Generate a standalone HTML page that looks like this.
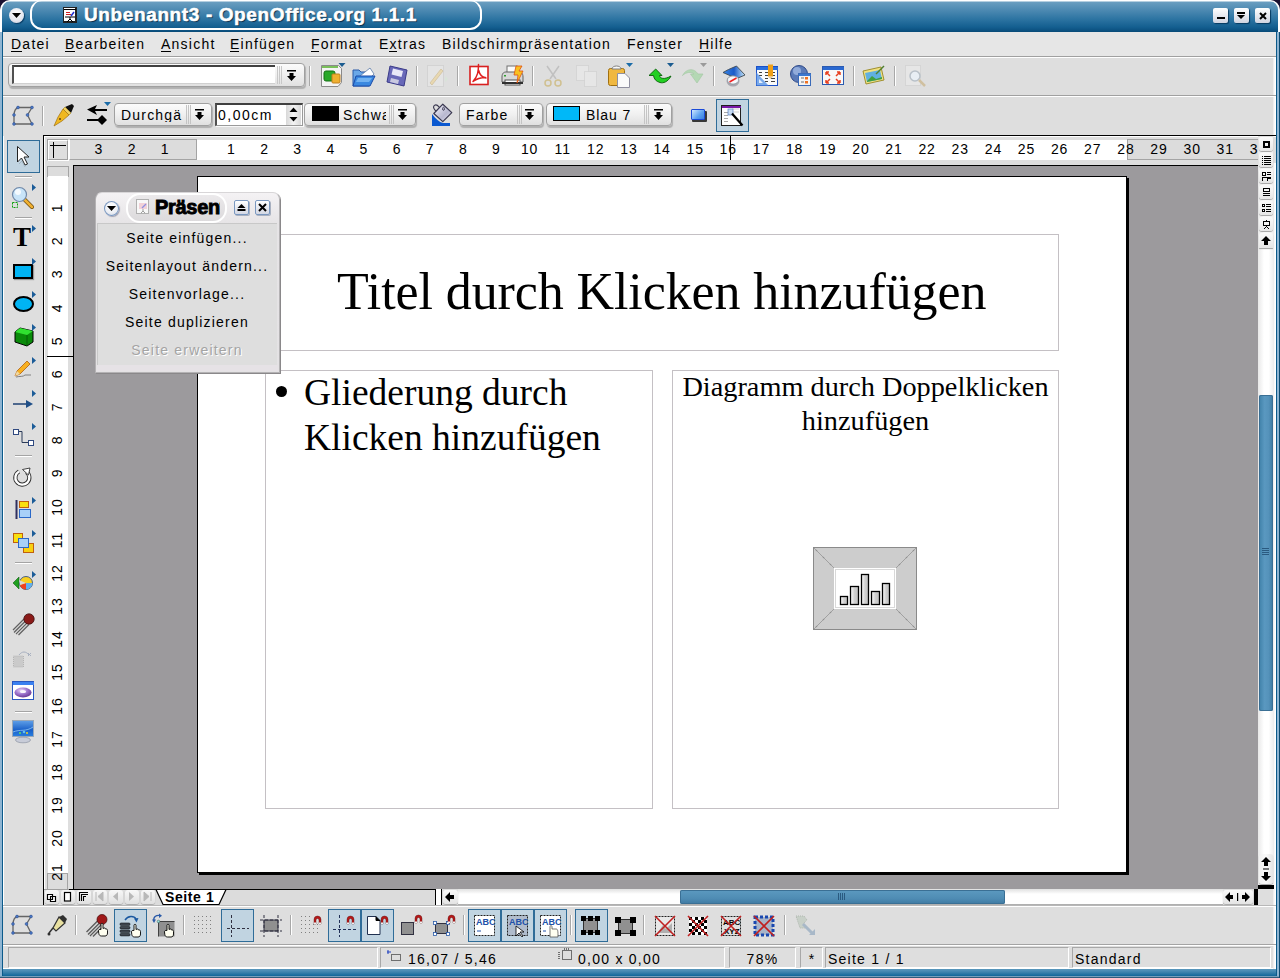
<!DOCTYPE html>
<html><head><meta charset="utf-8">
<style>
*{margin:0;padding:0;box-sizing:border-box}
html,body{width:1280px;height:978px;overflow:hidden;background:#dedede;font-family:"Liberation Sans",sans-serif;font-size:14px;color:#000}
.a{position:absolute}
.t{position:absolute;white-space:nowrap;line-height:1}
.hl{position:absolute;height:1px;background:#a0a0a0}
.wl{position:absolute;height:1px;background:#fff}
.vs{position:absolute;width:2px;height:20px;border-left:1px solid #a8a8a8;border-right:1px solid #fff}
.menu{top:37px;letter-spacing:1.25px}
.ul{position:absolute;height:1px;background:#000}
svg{position:absolute;overflow:visible}
.cb{position:absolute;border:1px solid #a0a0a0;border-radius:4px;background:linear-gradient(#fbfbfb,#f0f0f0 50%,#e0e0e0);box-shadow:1px 2px 1px #b0b0b0}
.sel{position:absolute;background:#c1d4e1;border:1px solid #2f6c98}
.rn{position:absolute;font-size:14px;line-height:1;letter-spacing:0.9px}
</style></head>
<body>
<!-- window frame -->
<div class="a" style="left:0;top:0;width:1280px;height:978px;background:#8fb5d2"></div>
<div class="a" style="left:0;top:976px;width:1280px;height:2px;background:linear-gradient(#9cc0da,#0a3a5c)"></div>
<div class="a" style="left:2px;top:0;width:1275px;height:976px;background:#0c5a8a"></div>
<div class="a" style="left:3px;top:969px;width:1273px;height:7px;background:linear-gradient(#5a98bd,#3f84ae 3px,#10679a)"></div>
<div class="a" style="left:1279px;top:30px;width:1px;height:948px;background:#0d4a70"></div>
<div class="a" style="left:3px;top:32px;width:1273px;height:937px;background:#dedede"></div>
<div class="a" style="left:3px;top:968px;width:1273px;height:1px;background:#fff"></div>
<div class="a" style="left:1273px;top:32px;width:3px;height:937px;background:linear-gradient(90deg,#e8e8e8,#fff 66%,#fff)"></div>
<!-- title bar -->
<div class="a" style="left:0;top:0;width:1280px;height:32px;background:linear-gradient(#fff 0,#fff 1px,#6a9ec0 2px,#4d8ab2 10px,#2d74a2 19px,#145f90 27px,#0a4f7e 31px,#094a76 32px);border-radius:10px 10px 0 0"></div>
<div class="a" style="left:0;top:0;width:10px;height:10px;background:radial-gradient(circle at 100% 100%,transparent 9px,#1a1030 10px)"></div>
<div class="a" style="left:1270px;top:0;width:10px;height:10px;background:radial-gradient(circle at 0 100%,transparent 9px,#1a1030 10px)"></div>
<div class="a" style="left:0;top:0;width:1280px;height:32px;border:1px solid #fff;border-left-width:2px;border-right-width:2px;border-bottom:none;border-radius:10px 10px 0 0"></div>
<!-- pill -->
<div class="a" style="left:30px;top:0;width:452px;height:30px;border:2px solid #fff;border-top-width:1px;border-radius:12px;background:linear-gradient(#fff 0,#6a9ec0 1px,#4d8ab2 9px,#2d74a2 18px,#145f90 26px,#10598a)"></div>
<!-- menu circle button -->
<div class="a" style="left:9px;top:8px;width:15px;height:15px;border-radius:50%;background:radial-gradient(circle at 50% 35%,#fff,#e4e6ee 60%,#c4c8d6);box-shadow:1px 1px 1px #0a3e66"></div>
<svg style="left:12px;top:13px" width="10" height="6"><path d="M0 0H9L4.5 5z" fill="#000"/></svg>
<!-- title icon -->
<div class="a" style="left:63px;top:7px;width:14px;height:16px;background:#fff;border:1px solid #222;border-right-width:2px;border-bottom-width:2px"></div>
<svg style="left:64px;top:8px" width="12" height="14"><rect x="0" y="1" width="12" height="1" fill="#000"/><rect x="2" y="4" width="4" height="1" fill="#d02020"/><rect x="2" y="6" width="5" height="1" fill="#d02020"/><path d="M7 8L10 4" stroke="#2030d0" stroke-width="1.5"/><path d="M1 9H11M6 9V11M6 11L3 14M6 11L9 14" stroke="#000" stroke-width="1" fill="none"/></svg>
<div class="t" style="left:84px;top:5px;font-size:19px;font-weight:bold;color:#fff;letter-spacing:0.62px;-webkit-text-stroke:0.5px #fff;text-shadow:1px 1px 1px #082a48">Unbenannt3 - OpenOffice.org 1.1.1</div>
<!-- window buttons -->
<div class="a" style="left:1213px;top:8px;width:15px;height:15px;border-radius:2px;background:linear-gradient(#fff,#e8eaf0 50%,#d0d4e0);box-shadow:1px 1px 1px #063a60"></div>
<div class="a" style="left:1217px;top:17px;width:8px;height:2px;background:#000"></div>
<div class="a" style="left:1234px;top:8px;width:15px;height:15px;border-radius:2px;background:linear-gradient(#fff,#e8eaf0 50%,#d0d4e0);box-shadow:1px 1px 1px #063a60"></div>
<svg style="left:1237px;top:12px" width="9" height="8"><rect x="0" y="0" width="8" height="2" fill="#000"/><path d="M0 3H8L4 7z" fill="#000"/></svg>
<div class="a" style="left:1255px;top:8px;width:15px;height:15px;border-radius:2px;background:linear-gradient(#fff,#e8eaf0 50%,#d0d4e0);box-shadow:1px 1px 1px #063a60"></div>
<svg style="left:1259px;top:12px" width="8" height="8"><path d="M1 1L7 7M7 1L1 7" stroke="#000" stroke-width="2"/></svg>

<!-- menu bar -->
<div class="a" style="left:3px;top:32px;width:1273px;height:24px;background:#e6e6e6"></div>
<div class="hl" style="left:3px;top:56px;width:1273px"></div>
<div class="wl" style="left:3px;top:57px;width:1273px"></div>
<div class="t menu" style="left:11px">Datei</div><div class="ul" style="left:11px;top:51px;width:11px"></div>
<div class="t menu" style="left:65px">Bearbeiten</div><div class="ul" style="left:65px;top:51px;width:10px"></div>
<div class="t menu" style="left:161px">Ansicht</div><div class="ul" style="left:161px;top:51px;width:10px"></div>
<div class="t menu" style="left:230px">Einfügen</div><div class="ul" style="left:230px;top:51px;width:9px"></div>
<div class="t menu" style="left:311px">Format</div><div class="ul" style="left:311px;top:51px;width:8px"></div>
<div class="t menu" style="left:379px">Extras</div><div class="ul" style="left:389px;top:51px;width:8px"></div>
<div class="t menu" style="left:442px">Bildschirmpräsentation</div><div class="ul" style="left:520px;top:51px;width:9px"></div>
<div class="t menu" style="left:627px">Fenster</div><div class="ul" style="left:654px;top:51px;width:8px"></div>
<div class="t menu" style="left:699px">Hilfe</div><div class="ul" style="left:699px;top:51px;width:11px"></div>

<!-- toolbar separators -->
<div class="hl" style="left:3px;top:95px;width:1273px"></div>
<div class="wl" style="left:3px;top:96px;width:1273px"></div>

<!-- TB1 combo -->
<div class="cb" style="left:8px;top:63px;width:297px;height:24px"></div>
<div class="a" style="left:12px;top:65px;width:263px;height:19px;background:#fff;border-top:2px solid #404040;border-left:2px solid #505050;border-bottom:1px solid #d0d0d0"></div>
<div class="a" style="left:277px;top:66px;width:5px;height:18px;border-left:1px solid #c8c8c8;border-right:1px solid #c8c8c8"></div>
<div class="a" style="left:279px;top:66px;width:1px;height:18px;background:#c8c8c8"></div>
<svg style="left:287px;top:70px" width="10" height="12"><rect x="0" y="0" width="9" height="1.5" fill="#000"/><path d="M2.5 3H6.5V6H9L4.5 11L0 6H2.5z" fill="#000"/></svg>
<div class="vs" style="left:309px;top:66px"></div>
<!-- new -->
<svg style="left:321px;top:64px" width="26" height="24">
<path d="M0.5 1.5H17.5L20.5 4.5V18.5L17 22.5H0.5z" fill="#f4f4f4" stroke="#8a8a8a"/>
<rect x="1" y="2" width="16" height="2" fill="#7ac05a"/>
<rect x="3" y="7" width="11" height="10" rx="2" fill="#2aa82a" stroke="#157015"/>
<rect x="11" y="10" width="8" height="9" rx="1" fill="#f0b030" stroke="#c08020"/>
<path d="M17.5 -1H24.5L21 3z" fill="#1b5c90"/>
</svg>
<!-- open -->
<svg style="left:352px;top:66px" width="24" height="21">
<path d="M1 4H7L9 6H17V20H1z" fill="#6aa8e8" stroke="#2a5aa8"/>
<path d="M8 10L18 2L22 8L14 16z" fill="#fff" stroke="#5a7aa8" stroke-width="0.8"/>
<path d="M4 10H23L18 20H1z" fill="#3a88e0" stroke="#1a4aa8"/>
<path d="M6 12H20L17 16H4z" fill="#8ac4f8" opacity="0.7"/>
</svg>
<!-- save -->
<svg style="left:386px;top:65px" width="22" height="22">
<path d="M4 1L21 5L18 21L1 17z" fill="#6868b8" stroke="#3a3a88"/>
<path d="M7 3.5L17 6L15.5 12L5.5 9.5z" fill="#e8e8f8"/>
<path d="M5 13L13 15L12 19L4 17z" fill="#c8c8e0"/>
</svg>
<div class="vs" style="left:416px;top:66px"></div>
<!-- edit disabled -->
<svg style="left:427px;top:65px" width="24" height="23">
<rect x="0.5" y="0.5" width="16" height="21" fill="#e4e4e4" stroke="#c4c4c4" stroke-dasharray="1 1"/>
<path d="M3 18L14 4L16 6L5 20z" fill="#e8d8b0" stroke="#d0c0a0" stroke-width="0.8"/>
<path d="M18 11l3 3l-3 3z" fill="#d8e4d8"/>
</svg>
<div class="vs" style="left:457px;top:66px"></div>
<!-- pdf -->
<svg style="left:469px;top:64px" width="21" height="24">
<rect x="1" y="2.5" width="18" height="18" fill="#fff" stroke="#d82020" stroke-width="1.6"/>
<path d="M9.5 0.5C9.5 7 9 12 4 17.5M9.5 6C10.5 10 13 13.5 17 14M4 17.5C8 14.5 12 13.5 16.5 13.5" fill="none" stroke="#e02020" stroke-width="1.5" stroke-linecap="round"/>
</svg>
<!-- print -->
<svg style="left:501px;top:65px" width="24" height="23">
<rect x="6" y="1" width="10" height="7" fill="#fafafa" stroke="#707070"/>
<path d="M1 12C1 8 3 7 5 7H18C20 7 22 8 22 12V17H1z" fill="#d8d8d8" stroke="#606060"/>
<rect x="4" y="15" width="15" height="5" fill="#fff" stroke="#505050"/>
<rect x="1" y="17" width="21" height="2" fill="#303030"/>
<rect x="3" y="10" width="2" height="1.5" fill="#30a030"/>
<path d="M15 1L21 1L18 6L22 6L16 18L17 10L13 10z" fill="#f8c020" stroke="#e05010" stroke-width="0.8"/>
</svg>
<div class="vs" style="left:532px;top:66px"></div>
<!-- cut disabled -->
<svg style="left:543px;top:65px" width="21" height="22">
<path d="M7 14L16 1M13 14L4 1" stroke="#c0c0c0" stroke-width="1.5"/>
<circle cx="5" cy="18" r="3" fill="none" stroke="#d0c090" stroke-width="1.5"/>
<circle cx="15" cy="18" r="3" fill="none" stroke="#d0c090" stroke-width="1.5"/>
</svg>
<!-- copy disabled -->
<svg style="left:576px;top:65px" width="22" height="22">
<rect x="0.5" y="0.5" width="12" height="15" fill="#e6e6e6" stroke="#c8c8c8" stroke-dasharray="1 1"/>
<rect x="8.5" y="6.5" width="12" height="15" fill="#e6e6e6" stroke="#c8c8c8" stroke-dasharray="1 1"/>
</svg>
<!-- paste -->
<svg style="left:608px;top:63px" width="26" height="25">
<rect x="0.5" y="5.5" width="16" height="17" rx="2" fill="#f0b840" stroke="#a07010"/>
<path d="M4 6C4 2 13 2 13 6z" fill="#f8f8f8" stroke="#808080"/>
<path d="M9.5 10.5H17L21.5 15V24.5H9.5z" fill="#fafafa" stroke="#9090a0"/>
<path d="M18 0L25 0L21.5 4z" fill="#1b6ca8"/>
</svg>
<!-- undo -->
<svg style="left:649px;top:63px" width="26" height="23">
<path d="M0 12.5L6.7 6L13 12.5H10.5C11 15.5 15 17 22 13C19 19 14 20.5 11 19.5C7 18.5 5 16 4.5 12.5Z" fill="#22d022" stroke="#0a600a" stroke-width="0.9" stroke-linejoin="round"/>
<path d="M18 0L25 0L21.5 4z" fill="#1b5c90"/>
</svg>
<!-- redo disabled -->
<svg style="left:682px;top:63px" width="26" height="23">
<path d="M0.5 12.5C4 5.5 12 4.5 16 11L21 11L15 20L8.5 11L12 11C9.5 8.5 4 9 0.5 12.5Z" fill="#b4d8b4" stroke="#a8c8a8" stroke-width="0.7"/>
<path d="M18 0L25 0L21.5 4z" fill="#9a9a9a"/>
</svg>
<div class="vs" style="left:713px;top:66px"></div>
<!-- navigator -->
<svg style="left:722px;top:64px" width="25" height="24">
<defs><linearGradient id="mp" x1="0" y1="0" x2="1" y2="0"><stop offset="0" stop-color="#3a88e8"/><stop offset="0.5" stop-color="#1a5ac8"/><stop offset="1" stop-color="#c8e8f8"/></linearGradient></defs>
<path d="M1 8.5L6.5 5.5L14.5 2L23 11L16 14L9 12Z" fill="url(#mp)" stroke="#404850" stroke-width="0.9" stroke-linejoin="round"/>
<ellipse cx="11" cy="17" rx="6.5" ry="5.5" fill="#a8a8b0"/>
<ellipse cx="11" cy="16" rx="5.5" ry="4" fill="#f4f8fc" stroke="#808890" stroke-width="0.6"/>
<path d="M7.5 18L14.5 14" stroke="#f02020" stroke-width="1.6"/>
</svg>
<!-- table pencil -->
<svg style="left:756px;top:64px" width="23" height="23">
<rect x="0.5" y="2.5" width="21" height="19" fill="#fafafa" stroke="#1a50c8"/>
<rect x="1" y="3" width="21" height="3" fill="#2a70e0"/>
<path d="M3 8.5H6M9 8.5H12M15 8.5H19M3 11.5H6M9 11.5H12M15 11.5H19M9 14.5H12M15 14.5H19M9 17.5H12M15 17.5H19" stroke="#404040" stroke-width="1"/>
<path d="M0.5 8.5V21.5H12.5z" fill="#6aa0e8" opacity="0.9"/>
<path d="M3 15V19H7z" fill="#fff" opacity="0.8"/>
<rect x="12" y="0.5" width="5" height="12" fill="#f0a018"/>
<path d="M12 12.5H17L14.5 15z" fill="#e8c890"/>
</svg>
<!-- globe -->
<svg style="left:790px;top:65px" width="22" height="22">
<circle cx="9" cy="9" r="8.5" fill="#5a7ab8" stroke="#304a88"/>
<circle cx="7" cy="6" r="4" fill="#a8c0e8" opacity="0.7"/>
<rect x="8.5" y="8.5" width="12" height="12" fill="#f4f4f4" stroke="#3a6ab8"/>
<rect x="9" y="9" width="12" height="2" fill="#3a78d0"/>
<rect x="15" y="12" width="3" height="2.5" fill="#f07020"/><rect x="15" y="16" width="3" height="2.5" fill="#f07020"/>
<path d="M11 13H14M11 17H14" stroke="#707070"/>
</svg>
<!-- fullscreen -->
<svg style="left:822px;top:66px" width="23" height="20">
<rect x="0.5" y="0.5" width="21" height="18" fill="#f8f8f8" stroke="#2a5ab0"/>
<rect x="1" y="1" width="21" height="3" fill="#2a68d0"/>
<path d="M4 6L8 10M4 6H7M4 6V9M18 6L14 10M18 6H15M18 6V9M4 17L8 13M4 17H7M4 17V14M18 17L14 13M18 17H15M18 17V14" stroke="#e84020" stroke-width="1.5" fill="none"/>
</svg>
<div class="vs" style="left:853px;top:66px"></div>
<!-- picture -->
<svg style="left:862px;top:65px" width="24" height="22">
<path d="M1 6L19 2L22 15L4 19z" fill="#f0e080" stroke="#a09030"/>
<path d="M3 8L18 5L20 14L5 17z" fill="#60b0e0"/>
<path d="M5 16L10 11L14 14L20 12V14L5 17z" fill="#40a040"/>
<path d="M14 9L22 1" stroke="#508030" stroke-width="1.5"/>
</svg>
<div class="vs" style="left:894px;top:66px"></div>
<!-- zoom disabled -->
<svg style="left:905px;top:65px" width="22" height="22">
<rect x="0.5" y="0.5" width="15" height="20" fill="#e6e6e6" stroke="#c8c8c8" stroke-dasharray="1 1"/>
<circle cx="10" cy="11" r="5" fill="#e8eef4" stroke="#b8c0c8" stroke-width="1.5"/>
<path d="M14 15L20 21" stroke="#d0c0a0" stroke-width="2.5"/>
</svg>

<!--TB1-->
<!-- TB2 -->
<svg style="left:13px;top:106px" width="22" height="20">
<path d="M5 1.5H19L14.5 9L19 18H1V9C1 5 3 2 5 1.5z" fill="none" stroke="#656565" stroke-width="1.3"/>
<g fill="#4a78c8" stroke="#2a4a88" stroke-width="0.5"><circle cx="5" cy="1.5" r="1.4"/><circle cx="19" cy="1.5" r="1.4"/><circle cx="1" cy="9" r="1.4"/><circle cx="14.5" cy="9" r="1.4"/><circle cx="1" cy="18" r="1.4"/><circle cx="19" cy="18" r="1.4"/></g>
</svg>
<div class="vs" style="left:42px;top:106px"></div>
<svg style="left:54px;top:104px" width="21" height="23">
<path d="M11 3L18 0L20 2L17 9z" fill="#101010"/>
<path d="M11 3L17 9L15 11L9 5z" fill="#f0d060" stroke="#a08020" stroke-width="0.6"/>
<path d="M9 5L15 11L8 17L0 22L4 13z" fill="#f0b820" stroke="#a07010" stroke-width="0.7"/>
<circle cx="6" cy="15" r="1" fill="#604010"/>
</svg>
<svg style="left:86px;top:101px" width="26" height="24">
<path d="M1 8.5L11 4L9 8H21V10H9L11 14z" fill="#000"/>
<path d="M1 19H14" stroke="#000" stroke-width="2"/>
<path d="M16 14L21 19L16 24L11 19z" fill="#000"/>
<path d="M18 1L25 1L21.5 5z" fill="#1b6ca8"/>
</svg>
<!-- combo durchg -->
<div class="cb" style="left:114px;top:103px;width:98px;height:23px"></div>
<div class="t" style="left:121px;top:108px;letter-spacing:1.2px;width:65px;overflow:hidden">Durchgä</div>
<div class="a" style="left:186px;top:105px;width:5px;height:19px;border-left:1px solid #c4c4c4;border-right:1px solid #c4c4c4"></div>
<div class="a" style="left:188px;top:105px;width:1px;height:19px;background:#c4c4c4"></div>
<svg style="left:195px;top:109px" width="10" height="12"><rect x="0" y="0" width="9" height="1.5" fill="#000"/><path d="M2.5 3H6.5V6H9L4.5 11L0 6H2.5z" fill="#000"/></svg>
<!-- spin -->
<div class="a" style="left:215px;top:103px;width:88px;height:23px;background:#fff;border:1px solid #9a9a9a;border-top:2px solid #404040;border-left:2px solid #505050;box-shadow:1px 1px 0 #f8f8f8"></div>
<div class="t" style="left:218px;top:108px;letter-spacing:1.5px">0,00cm</div>
<div class="a" style="left:286px;top:105px;width:15px;height:20px;background:linear-gradient(90deg,#d8d8d8,#f4f4f4 50%,#d8d8d8)"></div>
<svg style="left:289px;top:106px" width="9" height="18"><path d="M0.5 6L4.5 1.5L8.5 6z" fill="#000"/><path d="M0.5 11L4.5 15.5L8.5 11z" fill="#000"/></svg>
<!-- combo schwarz -->
<div class="cb" style="left:304px;top:103px;width:112px;height:23px"></div>
<div class="a" style="left:312px;top:106px;width:27px;height:15px;background:#000"></div>
<div class="t" style="left:343px;top:108px;letter-spacing:1.2px;width:43px;overflow:hidden">Schwarz</div>
<div class="a" style="left:389px;top:105px;width:5px;height:19px;border-left:1px solid #c4c4c4;border-right:1px solid #c4c4c4"></div>
<div class="a" style="left:391px;top:105px;width:1px;height:19px;background:#c4c4c4"></div>
<svg style="left:398px;top:109px" width="10" height="12"><rect x="0" y="0" width="9" height="1.5" fill="#000"/><path d="M2.5 3H6.5V6H9L4.5 11L0 6H2.5z" fill="#000"/></svg>
<!-- bucket -->
<svg style="left:431px;top:103px" width="22" height="24">
<defs><linearGradient id="bk" x1="0" y1="0" x2="1" y2="1"><stop offset="0" stop-color="#fafaff"/><stop offset="0.6" stop-color="#b8b8d0"/><stop offset="1" stop-color="#e8e8f4"/></linearGradient></defs>
<path d="M1 11V23H19V20H12C8 19 5 16 1 11Z" fill="#0a58d0"/>
<ellipse cx="6" cy="5.5" rx="2.6" ry="4" transform="rotate(-40 6 5.5)" fill="none" stroke="#3a3850" stroke-width="1.1"/>
<path d="M2.8 10.5L11.8 1.2L20.8 9.6L11.8 18.6Z" fill="url(#bk)" stroke="#3a3850" stroke-width="1.2" stroke-linejoin="round"/>
<ellipse cx="12.5" cy="5.8" rx="0.9" ry="1.6" fill="none" stroke="#3a3850" stroke-width="0.9"/>
</svg>
<!-- combo farbe -->
<div class="cb" style="left:459px;top:103px;width:84px;height:23px"></div>
<div class="t" style="left:466px;top:108px;letter-spacing:1.2px">Farbe</div>
<div class="a" style="left:517px;top:105px;width:5px;height:19px;border-left:1px solid #c4c4c4;border-right:1px solid #c4c4c4"></div>
<div class="a" style="left:519px;top:105px;width:1px;height:19px;background:#c4c4c4"></div>
<svg style="left:525px;top:109px" width="10" height="12"><rect x="0" y="0" width="9" height="1.5" fill="#000"/><path d="M2.5 3H6.5V6H9L4.5 11L0 6H2.5z" fill="#000"/></svg>
<!-- combo blau -->
<div class="cb" style="left:546px;top:103px;width:126px;height:23px"></div>
<div class="a" style="left:553px;top:106px;width:27px;height:15px;background:#00b8f8;border:1px solid #000"></div>
<div class="t" style="left:586px;top:108px;letter-spacing:0.9px">Blau 7</div>
<div class="a" style="left:644px;top:105px;width:5px;height:19px;border-left:1px solid #c4c4c4;border-right:1px solid #c4c4c4"></div>
<div class="a" style="left:646px;top:105px;width:1px;height:19px;background:#c4c4c4"></div>
<svg style="left:654px;top:109px" width="10" height="12"><rect x="0" y="0" width="9" height="1.5" fill="#000"/><path d="M2.5 3H6.5V6H9L4.5 11L0 6H2.5z" fill="#000"/></svg>
<!-- shadow -->
<div class="a" style="left:692px;top:111px;width:15px;height:11px;background:#383838;border-radius:1px;filter:blur(0.3px)"></div>
<div class="a" style="left:691px;top:109px;width:14px;height:11px;background:linear-gradient(135deg,#d0e8ff,#5aa0f0 60%,#3a80e0);border:1px solid #1a4ad8;border-radius:1px"></div>
<!-- selected 'text' button -->
<div class="sel" style="left:716px;top:99px;width:33px;height:33px"></div>
<svg style="left:721px;top:104px" width="24" height="24">
<rect x="0.5" y="1.5" width="19" height="20" fill="#fff" stroke="#202020"/>
<rect x="1" y="2" width="19" height="2" fill="#7a1aa8"/>
<path d="M3 8.5H7M3 11.5H7M3 14.5H7M3 17.5H7" stroke="#a8a8a8"/>
<path d="M11 5H18M11 8H18" stroke="#d0d0d0"/>
<rect x="7" y="5" width="5" height="6" fill="#c8dcf4" stroke="#5a80c0" stroke-width="0.7"/>
<path d="M11 9.5L21.5 21.5" stroke="#000" stroke-width="2.2"/>
</svg>

<!--TB2-->
<!-- LEFT TOOLBAR -->
<div class="a" style="left:3px;top:136px;width:1px;height:769px;background:#fff"></div>
<div class="sel" style="left:7px;top:140px;width:33px;height:33px"></div>
<svg style="left:16px;top:145px" width="14" height="22"><path d="M1.5 1.5V17L5.5 13L9 20L11.5 19L8 12H13z" fill="#fff" stroke="#222" stroke-width="1" stroke-linejoin="round"/><path d="M3 19L6 16L9 22" stroke="#8a9aa8" stroke-width="1" fill="none" opacity="0.5"/></svg>
<div class="a" style="left:15px;top:176px;width:17px;height:1px;background:#a4a4a4;box-shadow:0 1px 0 #fff"></div>
<svg style="left:11px;top:184px" width="26" height="26">
<path d="M13 15L21 23" stroke="#6a4a10" stroke-width="4" stroke-linecap="round"/><path d="M13 15L21 23" stroke="#f0b030" stroke-width="2.6" stroke-linecap="round"/>
<circle cx="8.5" cy="10.5" r="7" fill="#c8e4f8" stroke="#7088a8" stroke-width="1.2"/><circle cx="7" cy="8" r="3" fill="#fff" opacity="0.8"/>
<rect x="1.5" y="18.5" width="5" height="5" fill="none" stroke="#10a010" stroke-dasharray="2 1"/>
<path d="M21 0L25 3.5L21 7z" fill="#1b5c98"/>
</svg>
<div class="a" style="left:15px;top:217px;width:17px;height:1px;background:#a4a4a4;box-shadow:0 1px 0 #fff"></div>
<div class="t" style="left:13px;top:224px;font-family:'Liberation Serif',serif;font-size:27px;font-weight:bold">T</div>
<svg style="left:32px;top:225px" width="5" height="8"><path d="M0 0L4 3.5L0 7z" fill="#1b5c98"/></svg>
<div class="a" style="left:13px;top:264px;width:20px;height:15px;background:#00b4f4;border:2px solid #000;box-shadow:1px 1px 1px #999"></div>
<svg style="left:32px;top:258px" width="5" height="8"><path d="M0 0L4 3.5L0 7z" fill="#1b5c98"/></svg>
<div class="a" style="left:13px;top:296px;width:21px;height:16px;background:#00b4f4;border:2px solid #000;border-radius:50%"></div>
<svg style="left:32px;top:291px" width="5" height="8"><path d="M0 0L4 3.5L0 7z" fill="#1b5c98"/></svg>
<svg style="left:14px;top:327px" width="20" height="20"><path d="M1 5L6 1L19 4V15L13 19L1 15z" fill="#0a8a0a" stroke="#000" stroke-width="1"/><path d="M1 5L6 1L19 4L13 8z" fill="#30e030"/><path d="M13 8V19" stroke="#065a06"/></svg>
<svg style="left:32px;top:324px" width="5" height="8"><path d="M0 0L4 3.5L0 7z" fill="#1b5c98"/></svg>
<svg style="left:13px;top:359px" width="20" height="20"><path d="M2 17L4 12L14 2L17 5L7 15z" fill="#f8b020" stroke="#b06010" stroke-width="0.8"/><path d="M2 17L4 12L7 15z" fill="#f0d8a0"/><path d="M3 18C7 17 10 18 12 16H18" stroke="#808080" fill="none"/></svg>
<svg style="left:32px;top:357px" width="5" height="8"><path d="M0 0L4 3.5L0 7z" fill="#1b5c98"/></svg>
<svg style="left:13px;top:397px" width="21" height="10"><path d="M0 7H14" stroke="#2a4a78" stroke-width="1.6"/><path d="M13 3L20 7L13 11z" fill="#1f4f88"/></svg>
<svg style="left:32px;top:390px" width="5" height="8"><path d="M0 0L4 3.5L0 7z" fill="#1b5c98"/></svg>
<svg style="left:12px;top:428px" width="22" height="19"><path d="M4 3.5H10V14.5H19" stroke="#2a3a58" stroke-width="1" fill="none"/><rect x="1.5" y="1.5" width="5" height="5" fill="#fff" stroke="#304a80"/><rect x="16.5" y="12.5" width="5" height="5" fill="#fff" stroke="#304a80"/></svg>
<svg style="left:32px;top:423px" width="5" height="8"><path d="M0 0L4 3.5L0 7z" fill="#1b5c98"/></svg>
<div class="a" style="left:15px;top:455px;width:17px;height:1px;background:#a4a4a4;box-shadow:0 1px 0 #fff"></div>
<svg style="left:14px;top:468px" width="19" height="19"><path d="M12.5 4A7 7 0 1 1 5 3.5" fill="none" stroke="#303030" stroke-width="4.2"/><path d="M12.5 4A7 7 0 1 1 5 3.5" fill="none" stroke="#fff" stroke-width="2.4"/><path d="M8.5 1.5L16 0L14.5 7z" fill="#fff" stroke="#303030" stroke-width="0.9" stroke-linejoin="round"/></svg>
<svg style="left:15px;top:500px" width="17" height="20"><rect x="0.5" y="0" width="2" height="19" fill="#303060"/><rect x="4.5" y="1.5" width="9" height="6" fill="#f8e010" stroke="#c06010"/><rect x="4.5" y="9.5" width="11" height="8" fill="#a8d0f8" stroke="#2a68c8"/></svg>
<svg style="left:32px;top:497px" width="5" height="8"><path d="M0 0L4 3.5L0 7z" fill="#1b5c98"/></svg>
<svg style="left:13px;top:533px" width="22" height="21"><rect x="0.5" y="0.5" width="9" height="9" fill="#f8e010" stroke="#c06010"/><rect x="10.5" y="10.5" width="10" height="9" fill="#f8d010" stroke="#c06010"/><rect x="5.5" y="5.5" width="10" height="9" fill="#a8d0f8" stroke="#2a68c8"/></svg>
<svg style="left:32px;top:530px" width="5" height="8"><path d="M0 0L4 3.5L0 7z" fill="#1b5c98"/></svg>
<div class="a" style="left:15px;top:562px;width:17px;height:1px;background:#a4a4a4;box-shadow:0 1px 0 #fff"></div>
<svg style="left:12px;top:575px" width="22" height="16"><path d="M1 8L7 2V14z" fill="#20a020" stroke="#106010" stroke-width="0.6"/><circle cx="14" cy="8" r="6.5" fill="#f8d020" stroke="#204080" stroke-width="0.8"/><path d="M14 8L20.5 8A6.5 6.5 0 0 1 14 14.5z" fill="#60b0f0"/><path d="M14 8L14 14.5A6.5 6.5 0 0 1 8 10z" fill="#f04020"/><path d="M14 8L8 10L7 5z" fill="#d8d8d8"/></svg>
<svg style="left:32px;top:571px" width="5" height="8"><path d="M0 0L4 3.5L0 7z" fill="#1b5c98"/></svg>
<svg style="left:12px;top:613px" width="23" height="23"><path d="M1 17L12 6M2 19.5L14 7.5M4 21L15.5 9.5M6.5 22L17 11.5" stroke="#606060" stroke-width="1.2"/><path d="M2 18L13 7M3 20.5L15 8.5M5 21.5L16.5 10.5" stroke="#c8c8c8" stroke-width="0.6"/><circle cx="17" cy="6" r="5.2" fill="#8a1a18" stroke="#401010" stroke-width="0.8"/></svg>
<svg style="left:13px;top:651px" width="20" height="17"><rect x="0.5" y="5" width="10" height="11" fill="#c8c8c8" opacity="0.9" stroke="#b0b0b0" stroke-dasharray="1 1"/><path d="M6 4C9 0 13 0 16 4" fill="none" stroke="#a8b0c0" stroke-width="1"/><path d="M15 2L18 5M18 2L15 5" stroke="#a8b0c0"/></svg>
<svg style="left:12px;top:681px" width="23" height="20"><defs><radialGradient id="tor" cx="0.4" cy="0.3" r="0.7"><stop offset="0" stop-color="#e8d8f8"/><stop offset="0.5" stop-color="#a078d0"/><stop offset="1" stop-color="#6a3a98"/></radialGradient></defs><rect x="0.5" y="0.5" width="21" height="18" fill="#fff" stroke="#2a58c0"/><rect x="1" y="1" width="21" height="3" fill="#3a80f0"/><ellipse cx="11" cy="11.5" rx="8.5" ry="5" fill="url(#tor)"/><ellipse cx="11" cy="10.5" rx="3" ry="1.6" fill="#f8f4fc"/></svg>
<div class="a" style="left:15px;top:711px;width:17px;height:1px;background:#a4a4a4;box-shadow:0 1px 0 #fff"></div>
<svg style="left:12px;top:720px" width="23" height="24"><defs><linearGradient id="mon" x1="0" y1="0" x2="0" y2="1"><stop offset="0" stop-color="#60a0e8"/><stop offset="0.6" stop-color="#1a60c8"/><stop offset="1" stop-color="#2a80e0"/></linearGradient></defs><rect x="0.5" y="0.5" width="21" height="16" fill="url(#mon)" stroke="#9aa8b8"/><path d="M1 12C8 9 14 12 21 7" stroke="#90c8f8" fill="none" stroke-width="0.8"/><circle cx="8" cy="13" r="1" fill="#60e060"/><circle cx="12" cy="12" r="1.3" fill="#60c0f0"/><circle cx="15" cy="13" r="1" fill="#f0d020"/><ellipse cx="11" cy="20" rx="7.5" ry="2.8" fill="#c8ccd8" stroke="#808898" stroke-width="0.6"/></svg>

<!--LEFT-->
<div class="a" style="left:43px;top:135px;width:1233px;height:1px;background:#000"></div>
<div class="a" style="left:43px;top:135px;width:1px;height:770px;background:#000"></div>
<div class="a" style="left:44px;top:136px;width:1214px;height:1px;background:#fff"></div>
<div class="a" style="left:44px;top:136px;width:1px;height:769px;background:#fff"></div>
<div class="a" style="left:47px;top:139px;width:22px;height:22px;border:1px solid #a0a0a0;border-right-color:#fff;border-bottom-color:#fff"></div>
<div class="a" style="left:48px;top:140px;width:20px;height:20px;border:1px solid #fff;border-right-color:#a0a0a0;border-bottom-color:#a0a0a0"></div>
<div class="a" style="left:53px;top:142px;width:1px;height:16px;background:#000"></div>
<div class="a" style="left:50px;top:145px;width:16px;height:1px;background:#000"></div>
<div class="a" style="left:69px;top:139px;width:128px;height:21px;background:#dcdcdc;border:1px solid #a4a4a4;border-left-color:#fff"></div>
<div class="a" style="left:1127px;top:139px;width:140px;height:21px;background:#dcdcdc;border:1px solid #a4a4a4"></div>
<div class="a" style="left:197px;top:140px;width:930px;height:20px;background:#fff"></div>
<div class="rn" style="left:155.1px;top:142px;width:20px;text-align:center">1</div>
<div class="rn" style="left:122.0px;top:142px;width:20px;text-align:center">2</div>
<div class="rn" style="left:88.9px;top:142px;width:20px;text-align:center">3</div>
<div class="rn" style="left:216.4px;top:142px;width:30px;text-align:center">1</div>
<div class="rn" style="left:249.5px;top:142px;width:30px;text-align:center">2</div>
<div class="rn" style="left:282.6px;top:142px;width:30px;text-align:center">3</div>
<div class="rn" style="left:315.8px;top:142px;width:30px;text-align:center">4</div>
<div class="rn" style="left:348.9px;top:142px;width:30px;text-align:center">5</div>
<div class="rn" style="left:382.0px;top:142px;width:30px;text-align:center">6</div>
<div class="rn" style="left:415.2px;top:142px;width:30px;text-align:center">7</div>
<div class="rn" style="left:448.3px;top:142px;width:30px;text-align:center">8</div>
<div class="rn" style="left:481.4px;top:142px;width:30px;text-align:center">9</div>
<div class="rn" style="left:514.6px;top:142px;width:30px;text-align:center">10</div>
<div class="rn" style="left:547.7px;top:142px;width:30px;text-align:center">11</div>
<div class="rn" style="left:580.8px;top:142px;width:30px;text-align:center">12</div>
<div class="rn" style="left:613.9px;top:142px;width:30px;text-align:center">13</div>
<div class="rn" style="left:647.1px;top:142px;width:30px;text-align:center">14</div>
<div class="rn" style="left:680.2px;top:142px;width:30px;text-align:center">15</div>
<div class="rn" style="left:713.3px;top:142px;width:30px;text-align:center">16</div>
<div class="rn" style="left:746.5px;top:142px;width:30px;text-align:center">17</div>
<div class="rn" style="left:779.6px;top:142px;width:30px;text-align:center">18</div>
<div class="rn" style="left:812.7px;top:142px;width:30px;text-align:center">19</div>
<div class="rn" style="left:845.9px;top:142px;width:30px;text-align:center">20</div>
<div class="rn" style="left:879.0px;top:142px;width:30px;text-align:center">21</div>
<div class="rn" style="left:912.1px;top:142px;width:30px;text-align:center">22</div>
<div class="rn" style="left:945.2px;top:142px;width:30px;text-align:center">23</div>
<div class="rn" style="left:978.4px;top:142px;width:30px;text-align:center">24</div>
<div class="rn" style="left:1011.5px;top:142px;width:30px;text-align:center">25</div>
<div class="rn" style="left:1044.6px;top:142px;width:30px;text-align:center">26</div>
<div class="rn" style="left:1077.8px;top:142px;width:30px;text-align:center">27</div>
<div class="rn" style="left:1110.9px;top:142px;width:30px;text-align:center">28</div>
<div class="rn" style="left:1144.0px;top:142px;width:30px;text-align:center">29</div>
<div class="rn" style="left:1177.2px;top:142px;width:30px;text-align:center">30</div>
<div class="rn" style="left:1210.3px;top:142px;width:30px;text-align:center">31</div>
<div class="rn" style="left:1243.4px;top:142px;width:30px;text-align:center">32</div>
<div class="a" style="left:1258px;top:137px;width:18px;height:26px;background:#dedede"></div>
<div class="a" style="left:730px;top:136px;width:1px;height:24px;background:#000"></div>
<div class="a" style="left:47px;top:166px;width:22px;height:11px;background:#dcdcdc;border:1px solid #a4a4a4;border-top-color:#a4a4a4"></div>
<div class="a" style="left:47px;top:873px;width:21px;height:17px;background:#dcdcdc;border:1px solid #a4a4a4;border-bottom:none"></div>
<div class="a" style="left:48px;top:176px;width:20px;height:697px;background:#fff"></div>
<div class="rn" style="left:46px;top:200.0px;width:24px;height:16px;text-align:center;transform:rotate(-90deg)">1</div>
<div class="rn" style="left:46px;top:233.2px;width:24px;height:16px;text-align:center;transform:rotate(-90deg)">2</div>
<div class="rn" style="left:46px;top:266.3px;width:24px;height:16px;text-align:center;transform:rotate(-90deg)">3</div>
<div class="rn" style="left:46px;top:299.5px;width:24px;height:16px;text-align:center;transform:rotate(-90deg)">4</div>
<div class="rn" style="left:46px;top:332.7px;width:24px;height:16px;text-align:center;transform:rotate(-90deg)">5</div>
<div class="rn" style="left:46px;top:365.9px;width:24px;height:16px;text-align:center;transform:rotate(-90deg)">6</div>
<div class="rn" style="left:46px;top:399.0px;width:24px;height:16px;text-align:center;transform:rotate(-90deg)">7</div>
<div class="rn" style="left:46px;top:432.2px;width:24px;height:16px;text-align:center;transform:rotate(-90deg)">8</div>
<div class="rn" style="left:46px;top:465.4px;width:24px;height:16px;text-align:center;transform:rotate(-90deg)">9</div>
<div class="rn" style="left:46px;top:498.6px;width:24px;height:16px;text-align:center;transform:rotate(-90deg)">10</div>
<div class="rn" style="left:46px;top:531.7px;width:24px;height:16px;text-align:center;transform:rotate(-90deg)">11</div>
<div class="rn" style="left:46px;top:564.9px;width:24px;height:16px;text-align:center;transform:rotate(-90deg)">12</div>
<div class="rn" style="left:46px;top:598.1px;width:24px;height:16px;text-align:center;transform:rotate(-90deg)">13</div>
<div class="rn" style="left:46px;top:631.2px;width:24px;height:16px;text-align:center;transform:rotate(-90deg)">14</div>
<div class="rn" style="left:46px;top:664.4px;width:24px;height:16px;text-align:center;transform:rotate(-90deg)">15</div>
<div class="rn" style="left:46px;top:697.6px;width:24px;height:16px;text-align:center;transform:rotate(-90deg)">16</div>
<div class="rn" style="left:46px;top:730.8px;width:24px;height:16px;text-align:center;transform:rotate(-90deg)">17</div>
<div class="rn" style="left:46px;top:764.0px;width:24px;height:16px;text-align:center;transform:rotate(-90deg)">18</div>
<div class="rn" style="left:46px;top:797.1px;width:24px;height:16px;text-align:center;transform:rotate(-90deg)">19</div>
<div class="rn" style="left:46px;top:830.3px;width:24px;height:16px;text-align:center;transform:rotate(-90deg)">20</div>
<div class="rn" style="left:46px;top:863.5px;width:24px;height:16px;text-align:center;transform:rotate(-90deg)">21</div>
<div class="a" style="left:47px;top:356px;width:26px;height:1px;background:#000"></div>
<div class="a" style="left:73px;top:165px;width:1185px;height:724px;background:#9c9a9d;border-left:1px solid #000;border-top:1px solid #000"></div>
<div class="a" style="left:199px;top:178px;width:930px;height:697px;background:#000"></div>
<div class="a" style="left:197px;top:176px;width:930px;height:697px;background:#fff;border:1px solid #000"></div>
<div class="a" style="left:265px;top:234px;width:794px;height:117px;border:1px solid #c4c0c4"></div>
<div class="a" style="left:265px;top:370px;width:388px;height:439px;border:1px solid #c4c0c4"></div>
<div class="a" style="left:672px;top:370px;width:387px;height:439px;border:1px solid #c4c0c4"></div>
<div class="t" style="left:337px;top:266px;font-family:'Liberation Serif',serif;font-size:52px;letter-spacing:-0.1px">Titel durch Klicken hinzufügen</div>
<div class="a" style="left:276px;top:386px;width:11px;height:11px;border-radius:50%;background:#000"></div>
<div class="t" style="left:304px;top:370px;font-family:'Liberation Serif',serif;font-size:37.5px;line-height:45px">Gliederung durch<br>Klicken hinzufügen</div>
<div class="t" style="left:672px;top:369.5px;width:387px;text-align:center;font-family:'Liberation Serif',serif;font-size:28.3px;line-height:34.3px">Diagramm durch Doppelklicken<br>hinzufügen</div>
<svg style="left:813px;top:547px" width="104" height="83">
<defs><linearGradient id="bar" x1="0" y1="0" x2="1" y2="0"><stop offset="0" stop-color="#fff"/><stop offset="0.5" stop-color="#d0d0d0"/><stop offset="1" stop-color="#c0c0c0"/></linearGradient></defs>
<rect x="0.5" y="0.5" width="103" height="82" fill="#cdcdcd" stroke="#8a8a8a"/>
<path d="M1 1L21 21M103 1L83 21M1 82L21 62M103 82L83 62" stroke="#a0a0a0"/>
<g fill="#909090"><circle cx="3.5" cy="3.5" r="0.8"/><circle cx="10.5" cy="10.5" r="0.8"/><circle cx="17.5" cy="17.5" r="0.8"/><circle cx="100.5" cy="3.5" r="0.8"/><circle cx="93.5" cy="10.5" r="0.8"/><circle cx="86.5" cy="17.5" r="0.8"/><circle cx="3.5" cy="79.5" r="0.8"/><circle cx="10.5" cy="72.5" r="0.8"/><circle cx="17.5" cy="65.5" r="0.8"/><circle cx="100.5" cy="79.5" r="0.8"/><circle cx="93.5" cy="72.5" r="0.8"/><circle cx="86.5" cy="65.5" r="0.8"/></g>
<rect x="21" y="21" width="62" height="41" fill="#fff"/>
<rect x="22.5" y="22.5" width="59" height="38" fill="none" stroke="#d8d8d8"/>
<g fill="url(#bar)" stroke="#000" stroke-width="1.3"><rect x="27.5" y="49.5" width="7" height="8"/><rect x="37.5" y="39.5" width="8" height="18"/><rect x="48.5" y="27.5" width="7" height="30"/><rect x="58.5" y="44.5" width="8" height="13"/><rect x="69.5" y="36.5" width="7" height="21"/></g>
</svg>
<!--WORK-->
<!-- RIGHT COLUMN -->
<div class="a" style="left:1258px;top:137px;width:15px;height:752px;background:linear-gradient(90deg,#e8e8e8,#fff 40%,#fff 70%,#f0f0f0)"></div>
<div class="a" style="left:1259px;top:137px;width:14px;height:14px;border-radius:3px;background:linear-gradient(#fafafa,#e6e6e6);box-shadow:0 1px 1px #a0a0a0"></div>
<div class="a" style="left:1259px;top:153px;width:14px;height:14px;border-radius:3px;background:linear-gradient(#fafafa,#e6e6e6);box-shadow:0 1px 1px #a0a0a0"></div>
<div class="a" style="left:1259px;top:169px;width:14px;height:14px;border-radius:3px;background:linear-gradient(#fafafa,#e6e6e6);box-shadow:0 1px 1px #a0a0a0"></div>
<div class="a" style="left:1259px;top:185px;width:14px;height:14px;border-radius:3px;background:linear-gradient(#fafafa,#e6e6e6);box-shadow:0 1px 1px #a0a0a0"></div>
<div class="a" style="left:1259px;top:201px;width:14px;height:14px;border-radius:3px;background:linear-gradient(#fafafa,#e6e6e6);box-shadow:0 1px 1px #a0a0a0"></div>
<div class="a" style="left:1259px;top:217px;width:14px;height:14px;border-radius:3px;background:linear-gradient(#fafafa,#e6e6e6);box-shadow:0 1px 1px #a0a0a0"></div>
<svg style="left:1262px;top:140px" width="9" height="9"><path d="M1 1h7v7h-7z M3 3v3h3v-3z" fill="#000" fill-rule="evenodd"/></svg>
<svg style="left:1262px;top:156px" width="9" height="9"><path d="M0 0h1v1h-1zM0 2h1v1h-1zM0 4h1v1h-1zM0 6h1v1h-1zM0 8h1v1h-1zM2 0h7v1h-7zM2 2h7v1h-7zM2 4h7v1h-7zM2 6h7v1h-7zM2 8h7v1h-7z" fill="#000"/></svg>
<svg style="left:1262px;top:172px" width="9" height="9"><path d="M0 0h4v4h-4zM1 1v2h2v-2zM5 0h4v1h-4zM5 2h4v1h-4zM0 5h9v1h-9zM0 6h1v3h-1zM5 6h1v3h-1zM6 6h3v1h-3z" fill="#000" fill-rule="evenodd"/></svg>
<svg style="left:1262px;top:188px" width="9" height="9"><path d="M1 0h7v4h-7zM2 1v2h5v-2zM1 5h7v1h-7zM1 7h7v1h-7z" fill="#000" fill-rule="evenodd"/></svg>
<svg style="left:1262px;top:204px" width="9" height="9"><path d="M0 0h3v3h-3zM1 1v1h1v-1zM0 5h3v3h-3zM1 6v1h1v-1zM4 0h5v1h-5zM4 2h5v1h-5zM4 5h5v1h-5zM4 7h5v1h-5z" fill="#000" fill-rule="evenodd"/></svg>
<svg style="left:1262px;top:220px" width="9" height="9"><path d="M1 1h7v5h-7zM2 2v3h5v-3zM4 0h1v1h-1zM4 6h1v1h-1zM3 7h1v1h-1zM5 7h1v1h-1zM2 8h1v1h-1zM6 8h1v1h-1z" fill="#000" fill-rule="evenodd"/></svg>
<div class="a" style="left:1259px;top:233px;width:14px;height:15px;border-radius:3px 3px 0 0;background:linear-gradient(#fafafa,#e6e6e6);box-shadow:0 1px 1px #a0a0a0"></div>
<svg style="left:1261px;top:236px" width="10" height="9"><path d="M5 0L10 5H7V9H3V5H0z" fill="#000"/></svg>
<div class="a" style="left:1259px;top:395px;width:14px;height:316px;border-radius:2px;background:linear-gradient(90deg,#3f80a8,#5a98c0 40%,#5592ba 70%,#3a78a0);box-shadow:0 0 0 1px #3a6f94 inset"></div>
<div class="a" style="left:1262px;top:548px;width:7px;height:8px;background:repeating-linear-gradient(#2a5a80 0 1px,transparent 1px 2px)"></div>
<div class="a" style="left:1259px;top:854px;width:14px;height:30px;border-radius:3px;background:linear-gradient(90deg,#f0f0f0,#fafafa 50%,#e4e4e4);box-shadow:0 1px 1px #a0a0a0"></div>
<svg style="left:1261px;top:857px" width="10" height="25"><path d="M5 0L10 5H7V9H3V5H0z" fill="#000"/><rect x="2" y="11.5" width="6" height="1" fill="#000"/><path d="M5 24L10 19H7V15H3V19H0z" fill="#000"/></svg>
<div class="a" style="left:1258px;top:885px;width:16px;height:4px;background:#000"></div>
<div class="a" style="left:1254px;top:889px;width:4px;height:16px;background:#000"></div>
<div class="a" style="left:1258px;top:889px;width:15px;height:16px;background:#dedede"></div>
<div class="a" style="left:44px;top:889px;width:392px;height:16px;background:#dcdcdc;border-top:1px solid #000"></div>
<div class="a" style="left:44px;top:889px;width:25px;height:1px;background:#a0a0a0"></div>
<div class="a" style="left:45px;top:890px;width:14px;height:14px;border-radius:3px;background:linear-gradient(#f8f8f8,#e0e0e0);box-shadow:0 1px 1px #a8a8a8"></div>
<div class="a" style="left:61px;top:890px;width:14px;height:14px;border-radius:3px;background:linear-gradient(#f8f8f8,#e0e0e0);box-shadow:0 1px 1px #a8a8a8"></div>
<div class="a" style="left:77px;top:890px;width:14px;height:14px;border-radius:3px;background:linear-gradient(#f8f8f8,#e0e0e0);box-shadow:0 1px 1px #a8a8a8"></div>
<div class="a" style="left:93px;top:890px;width:14px;height:14px;border-radius:3px;background:linear-gradient(#f8f8f8,#e0e0e0);box-shadow:0 1px 1px #a8a8a8"></div>
<div class="a" style="left:109px;top:890px;width:14px;height:14px;border-radius:3px;background:linear-gradient(#f8f8f8,#e0e0e0);box-shadow:0 1px 1px #a8a8a8"></div>
<div class="a" style="left:125px;top:890px;width:14px;height:14px;border-radius:3px;background:linear-gradient(#f8f8f8,#e0e0e0);box-shadow:0 1px 1px #a8a8a8"></div>
<div class="a" style="left:141px;top:890px;width:14px;height:14px;border-radius:3px;background:linear-gradient(#f8f8f8,#e0e0e0);box-shadow:0 1px 1px #a8a8a8"></div>
<svg style="left:47px;top:892px" width="10" height="10"><path d="M0.5 2.5H5.5V7.5H0.5zM3.5 4.5H8.5V9.5H3.5z" fill="#fff" stroke="#000" stroke-width="1.2"/></svg>
<svg style="left:63px;top:892px" width="10" height="10"><rect x="1.5" y="0.5" width="6" height="8.5" fill="#fff" stroke="#000" stroke-width="1.2"/></svg>
<svg style="left:79px;top:892px" width="10" height="10"><path d="M0.5 9V0.5H9M2.5 9V2.5H9M4.5 9V4.5H7" fill="none" stroke="#000" stroke-width="1.1"/></svg>
<svg style="left:95px;top:892px" width="10" height="10"><path d="M1 0V9M8 0L3 4.5L8 9z" fill="#b8b8b8" stroke="#b8b8b8"/></svg>
<svg style="left:111px;top:892px" width="10" height="10"><path d="M7 0L2 4.5L7 9z" fill="#b8b8b8"/></svg>
<svg style="left:127px;top:892px" width="10" height="10"><path d="M2 0L7 4.5L2 9z" fill="#b8b8b8"/></svg>
<svg style="left:143px;top:892px" width="10" height="10"><path d="M8 0V9M1 0L6 4.5L1 9z" fill="#b8b8b8" stroke="#b8b8b8"/></svg>
<svg style="left:155px;top:888px" width="72" height="18"><path d="M1 1.5H71L64 16.5H8z" fill="#fff" stroke="#000" stroke-width="1.2"/></svg>
<div class="t" style="left:165px;top:890px;font-weight:bold;font-size:14px;letter-spacing:0.6px">Seite 1</div>
<div class="a" style="left:435px;top:889px;width:7px;height:16px;background:#fff;border-left:1px solid #000;border-right:1px solid #000"></div>
<div class="a" style="left:458px;top:889px;width:765px;height:16px;background:linear-gradient(#e0e0e0,#fff 5px,#fff);border-bottom:1px solid #b0b0b0"></div>
<div class="a" style="left:443px;top:890px;width:15px;height:14px;border-radius:3px;background:linear-gradient(#fafafa,#e4e4e4);box-shadow:0 1px 1px #a8a8a8"></div>
<svg style="left:445px;top:892px" width="10" height="10"><path d="M0 5L5 0V3H9V7H5V10z" fill="#000"/></svg>
<div class="a" style="left:680px;top:890px;width:325px;height:14px;border-radius:2px;background:linear-gradient(#5c9ac0,#4f8cb4 60%,#3f7aa2);box-shadow:0 0 0 1px #3a6f94 inset"></div>
<div class="a" style="left:838px;top:893px;width:8px;height:7px;background:repeating-linear-gradient(90deg,#2a5a80 0 1px,transparent 1px 2px)"></div>
<div class="a" style="left:1223px;top:890px;width:30px;height:14px;border-radius:3px;background:linear-gradient(#fafafa,#e4e4e4);box-shadow:0 1px 1px #a8a8a8"></div>
<svg style="left:1225px;top:892px" width="26" height="10"><path d="M0 5L5 0V3H8V7H5V10z" fill="#000"/><rect x="12" y="1" width="1.2" height="8" fill="#000"/><path d="M25 5L20 0V3H17V7H20V10z" fill="#000"/></svg>
<div class="a" style="left:3px;top:905px;width:1273px;height:1px;background:#b8b8b8"></div>
<div class="a" style="left:3px;top:906px;width:1273px;height:1px;background:#fff"></div>
<!--RIGHT-->
<!-- BOTTOM TOOLBAR -->
<div class="a" style="left:3px;top:944px;width:1273px;height:1px;background:#a4a4a4"></div>
<div class="a" style="left:3px;top:945px;width:1273px;height:1px;background:#fff"></div>
<div class="sel" style="left:114px;top:909px;width:33px;height:33px"></div>
<div class="sel" style="left:221px;top:909px;width:33px;height:33px"></div>
<div class="sel" style="left:328px;top:909px;width:33px;height:33px"></div>
<div class="sel" style="left:361px;top:909px;width:33px;height:33px"></div>
<div class="sel" style="left:468px;top:909px;width:33px;height:33px"></div>
<div class="sel" style="left:501px;top:909px;width:33px;height:33px"></div>
<div class="sel" style="left:534px;top:909px;width:33px;height:33px"></div>
<div class="sel" style="left:575px;top:909px;width:33px;height:33px"></div>
<div class="vs" style="left:75px;top:915px"></div>
<div class="vs" style="left:183px;top:915px"></div>
<div class="vs" style="left:290px;top:915px"></div>
<div class="vs" style="left:463px;top:915px"></div>
<div class="vs" style="left:570px;top:915px"></div>
<div class="vs" style="left:643px;top:915px"></div>
<div class="vs" style="left:784px;top:915px"></div>
<svg style="left:12px;top:915px" width="23" height="21"><path d="M5 1.5H19L14.5 9L19 18H1V9C1 5 3 2 5 1.5z" fill="none" stroke="#656565" stroke-width="1.3"/><g fill="#4a78c8" stroke="#2a4a88" stroke-width="0.5"><circle cx="5" cy="1.5" r="1.4"/><circle cx="19" cy="1.5" r="1.4"/><circle cx="1" cy="9" r="1.4"/><circle cx="14.5" cy="9" r="1.4"/><circle cx="1" cy="18" r="1.4"/><circle cx="19" cy="18" r="1.4"/></g></svg>
<svg style="left:47px;top:915px" width="21" height="21"><path d="M12 2L18 8L9 16L6 13z" fill="#e8e0a0" stroke="#303030" stroke-width="1.2"/><path d="M16 0L20 4L18 8L12 2z" fill="#303030"/><path d="M6 13L2 18" stroke="#303030" stroke-width="1.5"/><circle cx="2" cy="19" r="1.5" fill="#303030"/></svg>
<svg style="left:86px;top:914px" width="23" height="23"><path d="M0.5 18L12 6.5M2 20.5L13.5 9M4 22L15 11M7 22.5L16 13.5" stroke="#5a5a5a" stroke-width="1.3"/><path d="M1.5 18.5L12.5 7.5M3 21L14 10M5 22.5L15.5 12" stroke="#b8b8b8" stroke-width="0.5"/><circle cx="16" cy="5.5" r="5" fill="#a01818" stroke="#400808" stroke-width="0.7"/><path transform="translate(12,9)" d="M3 5V1.2C3 0 5 0 5 1.2V5.5L6 5C7 4.8 7.5 5.5 7.5 6L8.2 6C9 6 9.5 6.5 9.5 7.5V10C9.5 12 8.5 13 7 13H3.5C2 13 1 12 0.8 10.5L0.5 8C0.4 6.8 1.5 6 3 6.5Z" fill="#fffff0" stroke="#000" stroke-width="0.9" stroke-linejoin="round"/></svg>
<svg style="left:119px;top:914px" width="24" height="24"><g fill="#404850" stroke="#101418" stroke-width="0.6"><rect x="1" y="9" width="10" height="2.4" rx="1"/><rect x="1" y="12.5" width="10" height="2.4" rx="1"/><rect x="1" y="16" width="10" height="2.4" rx="1"/><rect x="1" y="19.5" width="10" height="2.4" rx="1"/></g><path d="M6 6C9 1.5 15 1.5 17 5" fill="none" stroke="#1a58a0" stroke-width="1.4"/><path d="M15 4.5L19.5 4L17.5 8.5z" fill="#1a58a0"/><path transform="translate(12,10)" d="M3 5V1.2C3 0 5 0 5 1.2V5.5L6 5C7 4.8 7.5 5.5 7.5 6L8.2 6C9 6 9.5 6.5 9.5 7.5V10C9.5 12 8.5 13 7 13H3.5C2 13 1 12 0.8 10.5L0.5 8C0.4 6.8 1.5 6 3 6.5Z" fill="#fffff0" stroke="#000" stroke-width="0.9" stroke-linejoin="round"/></svg>
<svg style="left:152px;top:914px" width="24" height="24"><rect x="6.5" y="7.5" width="16" height="15" fill="#909090"/><path d="M6.5 22.5V7.5H22.5" fill="none" stroke="#404040" stroke-width="1"/><circle cx="6.5" cy="7.5" r="1.3" fill="#a0e8e0" stroke="#2a5050" stroke-width="0.5"/><path d="M2 7C1 3 4 1 8 1.5" fill="none" stroke="#2a5aa8" stroke-width="1.4"/><path d="M7 -0.5L10 1.8L7 4z" fill="#2a5aa8"/><path d="M0 5.5L2 9L4 5.5z" fill="#2a5aa8"/><path transform="translate(12,10)" d="M3 5V1.2C3 0 5 0 5 1.2V5.5L6 5C7 4.8 7.5 5.5 7.5 6L8.2 6C9 6 9.5 6.5 9.5 7.5V10C9.5 12 8.5 13 7 13H3.5C2 13 1 12 0.8 10.5L0.5 8C0.4 6.8 1.5 6 3 6.5Z" fill="#fffff0" stroke="#000" stroke-width="0.9" stroke-linejoin="round"/></svg>
<svg style="left:193px;top:915px" width="21" height="21"><rect x="1" y="1" width="1" height="1" fill="#808080"/><rect x="1" y="5" width="1" height="1" fill="#808080"/><rect x="1" y="9" width="1" height="1" fill="#808080"/><rect x="1" y="13" width="1" height="1" fill="#808080"/><rect x="1" y="17" width="1" height="1" fill="#808080"/><rect x="5" y="1" width="1" height="1" fill="#808080"/><rect x="5" y="5" width="1" height="1" fill="#808080"/><rect x="5" y="9" width="1" height="1" fill="#808080"/><rect x="5" y="13" width="1" height="1" fill="#808080"/><rect x="5" y="17" width="1" height="1" fill="#808080"/><rect x="9" y="1" width="1" height="1" fill="#808080"/><rect x="9" y="5" width="1" height="1" fill="#808080"/><rect x="9" y="9" width="1" height="1" fill="#808080"/><rect x="9" y="13" width="1" height="1" fill="#808080"/><rect x="9" y="17" width="1" height="1" fill="#808080"/><rect x="13" y="1" width="1" height="1" fill="#808080"/><rect x="13" y="5" width="1" height="1" fill="#808080"/><rect x="13" y="9" width="1" height="1" fill="#808080"/><rect x="13" y="13" width="1" height="1" fill="#808080"/><rect x="13" y="17" width="1" height="1" fill="#808080"/><rect x="17" y="1" width="1" height="1" fill="#808080"/><rect x="17" y="5" width="1" height="1" fill="#808080"/><rect x="17" y="9" width="1" height="1" fill="#808080"/><rect x="17" y="13" width="1" height="1" fill="#808080"/><rect x="17" y="17" width="1" height="1" fill="#808080"/></svg>
<svg style="left:226px;top:914px" width="24" height="24"><path d="M5.5 1V23M1 14.5H23" stroke="#303040" stroke-dasharray="3 2" stroke-width="1"/></svg>
<svg style="left:259px;top:914px" width="24" height="24"><rect x="5" y="6" width="14" height="11" fill="#909090" stroke="#303040"/><path d="M5 1V23M19 1V23M1 6H23M1 17H23" stroke="#303040" stroke-dasharray="3 2"/></svg>
<svg style="left:300px;top:915px" width="22" height="21"><rect x="1" y="1" width="1" height="1" fill="#808080"/><rect x="1" y="5" width="1" height="1" fill="#808080"/><rect x="1" y="9" width="1" height="1" fill="#808080"/><rect x="1" y="13" width="1" height="1" fill="#808080"/><rect x="1" y="17" width="1" height="1" fill="#808080"/><rect x="5" y="1" width="1" height="1" fill="#808080"/><rect x="5" y="5" width="1" height="1" fill="#808080"/><rect x="5" y="9" width="1" height="1" fill="#808080"/><rect x="5" y="13" width="1" height="1" fill="#808080"/><rect x="5" y="17" width="1" height="1" fill="#808080"/><rect x="9" y="1" width="1" height="1" fill="#808080"/><rect x="9" y="5" width="1" height="1" fill="#808080"/><rect x="9" y="9" width="1" height="1" fill="#808080"/><rect x="9" y="13" width="1" height="1" fill="#808080"/><rect x="9" y="17" width="1" height="1" fill="#808080"/><rect x="13" y="1" width="1" height="1" fill="#808080"/><rect x="13" y="5" width="1" height="1" fill="#808080"/><rect x="13" y="9" width="1" height="1" fill="#808080"/><rect x="13" y="13" width="1" height="1" fill="#808080"/><rect x="13" y="17" width="1" height="1" fill="#808080"/><rect x="17" y="1" width="1" height="1" fill="#808080"/><rect x="17" y="5" width="1" height="1" fill="#808080"/><rect x="17" y="9" width="1" height="1" fill="#808080"/><rect x="17" y="13" width="1" height="1" fill="#808080"/><rect x="17" y="17" width="1" height="1" fill="#808080"/><rect x="12" y="0" width="10" height="9" fill="#dedede"/><g transform="translate(14,1)"><path d="M0 8V3.5A3.5 3.5 0 0 1 7 3.5V8H5V4A1.5 1.5 0 0 0 2 4V8Z" fill="#b81818" stroke="#501010" stroke-width="0.4"/><rect x="0" y="6.5" width="2" height="1.5" fill="#f0f0f0"/><rect x="5" y="6.5" width="2" height="1.5" fill="#f0f0f0"/></g></svg>
<svg style="left:333px;top:914px" width="24" height="24"><path d="M6.5 1V23M0 15.5H23" stroke="#203058" stroke-dasharray="3 2"/><g transform="translate(14,2)"><path d="M0 8V3.5A3.5 3.5 0 0 1 7 3.5V8H5V4A1.5 1.5 0 0 0 2 4V8Z" fill="#b81818" stroke="#501010" stroke-width="0.4"/><rect x="0" y="6.5" width="2" height="1.5" fill="#f0f0f0"/><rect x="5" y="6.5" width="2" height="1.5" fill="#f0f0f0"/></g></svg>
<svg style="left:366px;top:914px" width="24" height="24"><path d="M1.5 2.5H10L14 6.5V20.5H1.5z" fill="#fff" stroke="#203050"/><path d="M10 2.5V6.5H14" fill="#000" stroke="#000"/><g transform="translate(15,2)"><path d="M0 8V3.5A3.5 3.5 0 0 1 7 3.5V8H5V4A1.5 1.5 0 0 0 2 4V8Z" fill="#b81818" stroke="#501010" stroke-width="0.4"/><rect x="0" y="6.5" width="2" height="1.5" fill="#f0f0f0"/><rect x="5" y="6.5" width="2" height="1.5" fill="#f0f0f0"/></g></svg>
<svg style="left:400px;top:914px" width="24" height="24"><rect x="1.5" y="8.5" width="12" height="12" fill="#909090" stroke="#303040"/><g transform="translate(15,1)"><path d="M0 8V3.5A3.5 3.5 0 0 1 7 3.5V8H5V4A1.5 1.5 0 0 0 2 4V8Z" fill="#b81818" stroke="#501010" stroke-width="0.4"/><rect x="0" y="6.5" width="2" height="1.5" fill="#f0f0f0"/><rect x="5" y="6.5" width="2" height="1.5" fill="#f0f0f0"/></g></svg>
<svg style="left:432px;top:914px" width="24" height="24"><rect x="3.5" y="9.5" width="12" height="10" fill="#909090" stroke="#303040"/><g fill="#fff" stroke="#2a5aa8" stroke-width="0.8"><rect x="1.5" y="7.5" width="3" height="3"/><rect x="14.5" y="7.5" width="3" height="3"/><rect x="1.5" y="18.5" width="3" height="3"/><rect x="14.5" y="18.5" width="3" height="3"/></g><g transform="translate(16,1)"><path d="M0 8V3.5A3.5 3.5 0 0 1 7 3.5V8H5V4A1.5 1.5 0 0 0 2 4V8Z" fill="#b81818" stroke="#501010" stroke-width="0.4"/><rect x="0" y="6.5" width="2" height="1.5" fill="#f0f0f0"/><rect x="5" y="6.5" width="2" height="1.5" fill="#f0f0f0"/></g></svg>
<svg style="left:473px;top:914px" width="24" height="24"><rect x="1.5" y="1.5" width="20" height="20" fill="#fff" stroke="#202020" stroke-dasharray="2 1"/><text x="3" y="11" font-family="Liberation Sans" font-weight="bold" font-size="9" fill="#2050a8">ABC</text><path d="M4 17H8" stroke="#2050a8"/></svg>
<svg style="left:506px;top:914px" width="24" height="24"><rect x="1.5" y="1.5" width="20" height="20" fill="#b0bccc" stroke="#202020" stroke-dasharray="2 1"/><text x="3" y="11" font-family="Liberation Sans" font-weight="bold" font-size="9" fill="#2050a8">ABC</text><path d="M10 12V22L13 19L16 23L17 22L14 18H18z" fill="#fff" stroke="#000" stroke-width="0.8"/></svg>
<svg style="left:539px;top:914px" width="24" height="24"><rect x="1.5" y="1.5" width="20" height="20" fill="#fff" stroke="#202020" stroke-dasharray="2 1"/><text x="3" y="11" font-family="Liberation Sans" font-weight="bold" font-size="9" fill="#2050a8">ABC</text><path d="M4 17H7" stroke="#2050a8"/><path d="M11 23V13C11 11 13 11 13 13V15H17C19 15 19 17 19 23z" fill="#fffff0" stroke="#404040" stroke-width="0.7"/></svg>
<svg style="left:580px;top:914px" width="24" height="24"><rect x="3.5" y="4.5" width="14" height="14" fill="#909090" stroke="#303030"/><g fill="#000"><rect x="1" y="2" width="5" height="5"/><rect x="8" y="2" width="5" height="5"/><rect x="15" y="2" width="5" height="5"/><rect x="1" y="16" width="5" height="5"/><rect x="8" y="16" width="5" height="5"/><rect x="15" y="16" width="5" height="5"/></g></svg>
<svg style="left:614px;top:914px" width="24" height="24"><rect x="4.5" y="5.5" width="14" height="14" fill="#909090" stroke="#303030"/><g fill="#000"><rect x="1" y="3" width="6" height="6"/><rect x="16" y="3" width="6" height="6"/><rect x="1" y="16" width="6" height="6"/><rect x="16" y="16" width="6" height="6"/></g></svg>
<svg style="left:654px;top:915px" width="23" height="22"><rect x="1.5" y="1.5" width="19" height="19" fill="#e8e8e8" stroke="#202020" stroke-dasharray="2 1"/><path d="M4 17L9 10L12 14L18 8V18H4z" fill="#b0b0b0"/><path d="M1 1L21 21M21 1L1 21" stroke="#c02020" stroke-width="1.6"/></svg>
<svg style="left:687px;top:915px" width="23" height="22"><rect x="2" y="2" width="3" height="3" fill="#000"/><rect x="2" y="5" width="3" height="3" fill="#fff"/><rect x="2" y="8" width="3" height="3" fill="#000"/><rect x="2" y="11" width="3" height="3" fill="#fff"/><rect x="2" y="14" width="3" height="3" fill="#000"/><rect x="2" y="17" width="3" height="3" fill="#fff"/><rect x="5" y="2" width="3" height="3" fill="#fff"/><rect x="5" y="5" width="3" height="3" fill="#000"/><rect x="5" y="8" width="3" height="3" fill="#fff"/><rect x="5" y="11" width="3" height="3" fill="#000"/><rect x="5" y="14" width="3" height="3" fill="#fff"/><rect x="5" y="17" width="3" height="3" fill="#000"/><rect x="8" y="2" width="3" height="3" fill="#000"/><rect x="8" y="5" width="3" height="3" fill="#fff"/><rect x="8" y="8" width="3" height="3" fill="#000"/><rect x="8" y="11" width="3" height="3" fill="#fff"/><rect x="8" y="14" width="3" height="3" fill="#000"/><rect x="8" y="17" width="3" height="3" fill="#fff"/><rect x="11" y="2" width="3" height="3" fill="#fff"/><rect x="11" y="5" width="3" height="3" fill="#000"/><rect x="11" y="8" width="3" height="3" fill="#fff"/><rect x="11" y="11" width="3" height="3" fill="#000"/><rect x="11" y="14" width="3" height="3" fill="#fff"/><rect x="11" y="17" width="3" height="3" fill="#000"/><rect x="14" y="2" width="3" height="3" fill="#000"/><rect x="14" y="5" width="3" height="3" fill="#fff"/><rect x="14" y="8" width="3" height="3" fill="#000"/><rect x="14" y="11" width="3" height="3" fill="#fff"/><rect x="14" y="14" width="3" height="3" fill="#000"/><rect x="14" y="17" width="3" height="3" fill="#fff"/><rect x="17" y="2" width="3" height="3" fill="#fff"/><rect x="17" y="5" width="3" height="3" fill="#000"/><rect x="17" y="8" width="3" height="3" fill="#fff"/><rect x="17" y="11" width="3" height="3" fill="#000"/><rect x="17" y="14" width="3" height="3" fill="#fff"/><rect x="17" y="17" width="3" height="3" fill="#000"/><path d="M1 1L21 21M21 1L1 21" stroke="#c02020" stroke-width="1.6"/></svg>
<svg style="left:720px;top:915px" width="23" height="22"><rect x="1.5" y="1.5" width="19" height="19" fill="#e0e0e0" stroke="#202020" stroke-dasharray="2 1"/><text x="3" y="10" font-family="Liberation Sans" font-weight="bold" font-size="8" fill="#000">ABC</text><text x="4" y="19" font-family="Liberation Sans" font-weight="bold" font-size="8" fill="#000">XYZ</text><path d="M1 1L21 21M21 1L1 21" stroke="#c02020" stroke-width="1.6"/></svg>
<svg style="left:753px;top:915px" width="23" height="22"><rect x="2" y="2" width="18" height="18" fill="#a8b4c8" stroke="#1a48b0" stroke-width="3" stroke-dasharray="3 2"/><path d="M1 1L21 21M21 1L1 21" stroke="#c02020" stroke-width="1.6"/></svg>
<svg style="left:794px;top:914px" width="23" height="23"><path d="M2 2H10L13 6L9 10L13 14H6z" fill="#c8d0c8" stroke="#b0b8b0" stroke-dasharray="1 1"/><path d="M9 10L19 20" stroke="#a8b8c8" stroke-width="3"/><path d="M15 21H21V15z" fill="#a8b8c8"/></svg>
<!-- STATUS -->
<div class="a" style="left:8px;top:947px;width:370px;height:21px;border:1px solid #a8a8a8;border-right-color:#fff;border-bottom-color:#fff"></div>
<div class="a" style="left:380px;top:947px;width:345px;height:21px;border:1px solid #a8a8a8;border-right-color:#fff;border-bottom-color:#fff"></div>
<div class="a" style="left:729px;top:947px;width:67px;height:21px;border:1px solid #a8a8a8;border-right-color:#fff;border-bottom-color:#fff"></div>
<div class="a" style="left:800px;top:947px;width:23px;height:21px;border:1px solid #a8a8a8;border-right-color:#fff;border-bottom-color:#fff"></div>
<div class="a" style="left:825px;top:947px;width:244px;height:21px;border:1px solid #a8a8a8;border-right-color:#fff;border-bottom-color:#fff"></div>
<div class="a" style="left:1072px;top:947px;width:199px;height:21px;border:1px solid #a8a8a8;border-right-color:#fff;border-bottom-color:#fff"></div>
<svg style="left:387px;top:950px" width="15" height="12"><path d="M1 0V4M0 2H4" stroke="#2040c0"/><rect x="4.5" y="4.5" width="9" height="6" fill="none" stroke="#000" stroke-dasharray="1 1"/></svg>
<div class="t" style="left:408px;top:952px;letter-spacing:1.25px">16,07 / 5,46</div>
<svg style="left:558px;top:949px" width="15" height="14"><rect x="4.5" y="1.5" width="9" height="9" fill="none" stroke="#000" stroke-dasharray="1 1"/><path d="M1 3V10" stroke="#000" stroke-dasharray="1 1"/><path d="M6 0H12" stroke="#000" stroke-dasharray="1 1"/></svg>
<div class="t" style="left:578px;top:952px;letter-spacing:1.25px">0,00 x 0,00</div>
<div class="t" style="left:729px;top:952px;width:67px;text-align:center;letter-spacing:1.25px">78%</div>
<div class="t" style="left:800px;top:952px;width:23px;text-align:center">*</div>
<div class="t" style="left:828px;top:952px;letter-spacing:1.25px">Seite 1 / 1</div>
<div class="t" style="left:1075px;top:952px;letter-spacing:1.25px">Standard</div>
<!--BOTTOM-->
<!--STATUS-->
<!-- POPUP -->
<div class="a" style="left:95px;top:192px;width:185px;height:181px;border:1px solid #b4b2b4;border-top-color:#d8d6d8;border-radius:7px 7px 0 0;background:linear-gradient(#f4f2f4,#e6e4e6 30px,#e4e2e4);box-shadow:1px 1px 0 #8a888a"></div>
<div class="a" style="left:97px;top:223px;width:180px;height:142px;background:#dedede;border-top:1px solid #c8c8c8;border-left:1px solid #c8c8c8"></div>
<div class="a" style="left:97px;top:365px;width:181px;height:6px;background:#e6e2e6"></div>
<div class="a" style="left:104px;top:201px;width:15px;height:15px;border-radius:50%;background:radial-gradient(circle at 50% 35%,#fff,#eceef4 55%,#b8c4d8);box-shadow:0 0 0 1px #7a98c0 inset,1px 1px 1px #a0a0b0"></div>
<svg style="left:107px;top:206px" width="10" height="6"><path d="M0 0H9L4.5 5z" fill="#000"/></svg>
<div class="a" style="left:126px;top:193px;width:101px;height:30px;border:2px solid #fff;border-radius:14px;background:linear-gradient(#ebe9eb,#dcdadc)"></div>
<div class="a" style="left:136px;top:199px;width:13px;height:15px;background:#f8f8f8;border:1px solid #b0b0b0"></div>
<svg style="left:137px;top:200px" width="12" height="14"><rect x="2" y="3" width="8" height="6" fill="#f0c8d0" opacity="0.8"/><path d="M5 8L9 4" stroke="#9090e0" stroke-width="1.2"/><path d="M6 9V11M6 11L4 13M6 11L8 13" stroke="#a0a0a0"/></svg>
<div class="t" style="left:155px;top:197px;width:65px;overflow:hidden;font-size:20px;font-weight:bold;letter-spacing:-0.3px;-webkit-text-stroke:0.9px #000">Präsentation</div>
<div class="a" style="left:234px;top:200px;width:15px;height:15px;border-radius:2px;background:linear-gradient(#fff,#e8eaf0 50%,#d4d8e4);border:1px solid #7a98c0;box-shadow:1px 1px 0 #a8b0c0"></div>
<svg style="left:237px;top:204px" width="9" height="8"><path d="M0.5 4L4.5 0L8.5 4z" fill="#000"/><rect x="0.5" y="5" width="8" height="2" fill="#000"/></svg>
<div class="a" style="left:255px;top:200px;width:15px;height:15px;border-radius:2px;background:linear-gradient(#fff,#e8eaf0 50%,#d4d8e4);border:1px solid #7a98c0;box-shadow:1px 1px 0 #a8b0c0"></div>
<svg style="left:258px;top:203px" width="9" height="9"><path d="M1 1L8 8M8 1L1 8" stroke="#000" stroke-width="2"/></svg>
<div class="t" style="left:97px;top:231px;width:180px;text-align:center;letter-spacing:1.2px">Seite einfügen...</div>
<div class="t" style="left:97px;top:259px;width:180px;text-align:center;letter-spacing:1.2px">Seitenlayout ändern...</div>
<div class="t" style="left:97px;top:287px;width:180px;text-align:center;letter-spacing:1.2px">Seitenvorlage...</div>
<div class="t" style="left:97px;top:315px;width:180px;text-align:center;letter-spacing:1.2px">Seite duplizieren</div>
<div class="t" style="left:97px;top:343px;width:180px;text-align:center;letter-spacing:1.2px;color:#a4a4a4;text-shadow:1px 1px 0 #fff">Seite erweitern</div>

<!--POPUP-->
</body></html>
